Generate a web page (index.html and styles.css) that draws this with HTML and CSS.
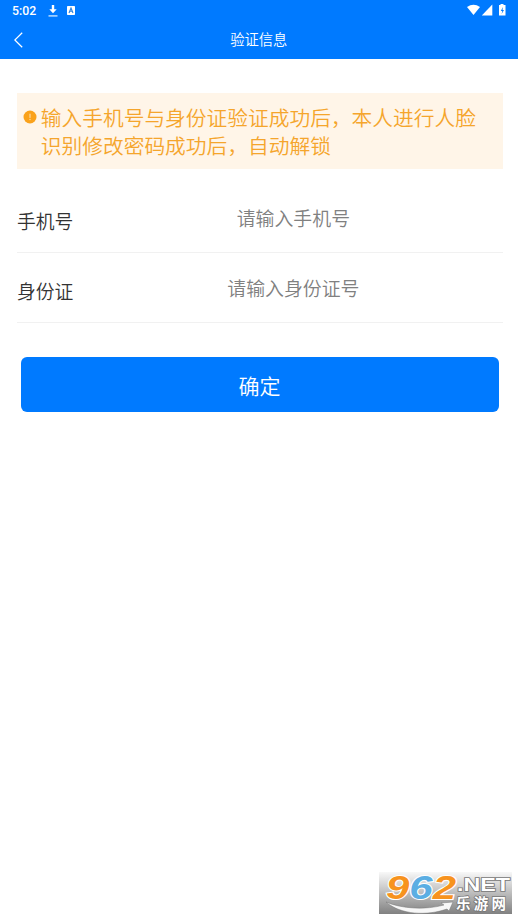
FILE: index.html
```html
<!DOCTYPE html>
<html lang="zh-CN">
<head>
<meta charset="utf-8">
<title>验证信息</title>
<link rel="stylesheet" href="styles.css">
</head>
<body>
<header class="top">
  <div class="status">
    <span class="time">5:02</span>
    <svg class="download" width="10" height="12" viewBox="0 0 10 12"><path d="M3.800 0h2.400v4.300h2.500L5 8.300 1.300 4.300h2.500z" fill="#fff"/><path d="M.5 10.900h9" stroke="#b9dcff" stroke-width="1.500"/></svg>
    <svg class="lang" width="8" height="9" viewBox="0 0 8 9"><rect width="8" height="9" rx=".7" fill="#fff"/><path d="M2 7l2-5 2 5M2.700 5.300h2.600" fill="none" stroke="#2b82df" stroke-width="1.100"/></svg>
    <svg class="signals" width="40" height="13" viewBox="0 0 40 13"><path d="M0 3Q6.500-1.500 13 3L6.500 11z" fill="#fff"/><path d="M25.300.5V11.500H14.800z" fill="#fff"/><path d="M33.500 0h3v1h2V11.500h-6.500V1h1.500z" fill="#fff"/><path d="M36 3l-2.200 4h1.500l-.7 3 2.400-4h-1.500z" fill="#007aff"/></svg>
  </div>
  <nav class="nav">
    <svg class="back" width="9" height="16" viewBox="0 0 9 16"><path d="M8.200.8L.8 8l7.400 7.200" fill="none" stroke="#fff" stroke-width="1.250"/></svg>
    <h1>验证信息</h1>
  </nav>
</header>
<main>
  <div class="notice">
    <svg class="alert" width="14" height="14" viewBox="0 0 14 14"><circle cx="7" cy="7" r="6.500" fill="#faa21b"/><path d="M7 3.700v4.200M7 8.900v1.200" stroke="#ffe4b8" stroke-width="1"/></svg>
    <p>输入手机号与身份证验证成功后，本人进行人脸识别修改密码成功后，自动解锁</p>
  </div>
  <form>
    <label class="row"><span>手机号</span><input type="text" placeholder="请输入手机号"></label>
    <label class="row"><span>身份证</span><input type="text" placeholder="请输入身份证号"></label>
    <button type="button">确定</button>
  </form>
</main>
<svg class="mark" width="133" height="42" viewBox="0 0 133 42">
  <defs><linearGradient id="shade" x1="0" y1="0" x2="0" y2="1"><stop offset="0" stop-color="#f8f8f8"/><stop offset=".5" stop-color="#bdbdbd"/><stop offset="1" stop-color="#818181"/></linearGradient></defs>
  <rect width="133" height="42" fill="url(#shade)"/>
  <text class="digits" x="7" y="26.500" textLength="70" lengthAdjust="spacingAndGlyphs">9<tspan class="blue">6</tspan>2</text>
  <path d="M7 30C23 37 47 38 65 33l-3-2 12-1-4 9-2-2C48 44 22 43 7 30z" fill="#f7f7f7" stroke="#777" stroke-width=".5"/>
  <text class="net" x="78" y="19" textLength="53" lengthAdjust="spacingAndGlyphs">.NET</text>
  <text class="site" x="77" y="37" textLength="50">乐游网</text>
</svg>
</body>
</html>
```
FILE: styles.css
```css
* { box-sizing: border-box; }
body {
  margin: 0;
  height: 920px;
  position: relative;
  overflow: hidden;
  background: #fff;
  color: #333;
  font-family: "Noto Sans CJK SC", sans-serif;
  font-weight: 350;
}
.top { height: 58.500px; background: #007aff; color: #fff; }
.status { height: 21px; display: flex; align-items: flex-start; padding: 4px 11px 0 12px; }
.time { width: 35.500px; font: 500 12.300px/14px Roboto, sans-serif; }
.download { margin-top: 1px; }
.lang { margin: 2px 0 0 9px; }
.signals { margin-left: auto; }
.nav { height: 37px; display: flex; align-items: center; padding: 0 14px 0 13.500px; }
.back { flex: none; }
h1 { flex: 1; margin: -2px 9px 0 0; font-size: 14.300px; font-weight: inherit; line-height: 20px; text-align: center; }
main { padding: 34.500px 15px 0 17px; }
.notice {
  height: 76px;
  display: flex;
  padding: 10px 20px 0 5.500px;
  background: #fff5e8;
  color: #f5a52c;
}
.alert { flex: none; margin: 7px 4.300px 0 0; }
.notice p { margin: 0; font-size: 20.730px; line-height: 28px; flex: none; width: 442px; }
form { padding-top: 14px; }
.row {
  height: 70px;
  display: flex;
  align-items: center;
  border-bottom: 1px solid #f1f1f1;
  font-size: 18.800px;
}
.row span { width: 67px; padding-top: 5px; }
input {
  width: 421px;
  border: 0;
  padding: 0;
  background: none;
  font: inherit;
  font-size: 18.900px;
  text-align: center;
}
input::placeholder { color: #808080; opacity: 1; }
button {
  display: block;
  width: 478px;
  height: 55px;
  margin: 34px 0 0 3.500px;
  padding: 0;
  border: 0;
  border-radius: 6px;
  background: #007aff;
  color: #fff;
  font: 350 21px/30px "Noto Sans CJK SC", sans-serif;
}
.mark { position: absolute; left: 379px; top: 872px; overflow: visible; }
.digits {
  fill: #f7931e;
  stroke: #fff;
  stroke-width: 2px;
  paint-order: stroke;
  font: italic 700 33px "Liberation Sans", sans-serif;
}
.blue { fill: #5baee3; }
.net, .site { fill: #fff; stroke: #777; stroke-width: 1.500px; paint-order: stroke; font-weight: 700; }
.net { font-family: "Liberation Sans", sans-serif; font-size: 18px; }
.site { font-family: "Noto Sans CJK SC", sans-serif; font-size: 14.500px; }
```
